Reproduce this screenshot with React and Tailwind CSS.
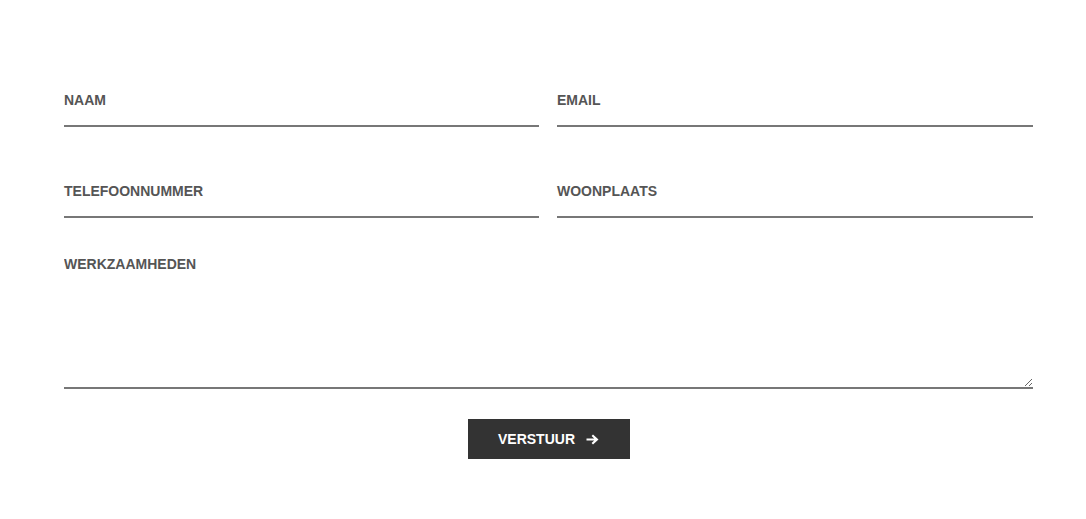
export default function App() {
  const font = { fontFamily: '"Liberation Sans", Arial, sans-serif' };
  const label = "block text-[14px] leading-4 font-bold text-[#555] uppercase";
  return (
    <div className="w-[1086px] h-[519px] bg-white pl-[64px] pr-[53px] pt-[92px]" style={font}>
      <div className="grid grid-cols-[475px_476px] gap-x-[18px] gap-y-[56px]">
        {["Naam", "Email", "Telefoonnummer", "Woonplaats"].map((t) => (
          <div key={t} className="border-b-2 border-[#777]">
            <span className={label}>{t}</span>
            <div className="h-[17px]" />
          </div>
        ))}
      </div>
      <div className="mt-[38px]">
        <textarea
          placeholder="WERKZAAMHEDEN"
          className="block w-full h-[133px] border-0 border-b-2 border-[#777] outline-none text-[14px] leading-4 font-bold text-[#555] placeholder:text-[#555] placeholder:opacity-100 p-0 resize-y"
          style={font}
        />
      </div>
      <div className="flex justify-center mt-[30px]">
        <button className="flex items-center justify-center gap-[11px] w-[162px] h-[40px] bg-[#333] text-white text-[14px] font-bold leading-4" style={font}>
          <span>VERSTUUR</span>
          <svg width="13" height="11" viewBox="0 0 13 11" fill="white">
            <path d="M7 0.5 L12.5 5.5 L7 10.5 L5.6 9.1 L8.2 6.5 H0.5 V4.5 H8.2 L5.6 1.9 Z" />
          </svg>
        </button>
      </div>
    </div>
  );
}
